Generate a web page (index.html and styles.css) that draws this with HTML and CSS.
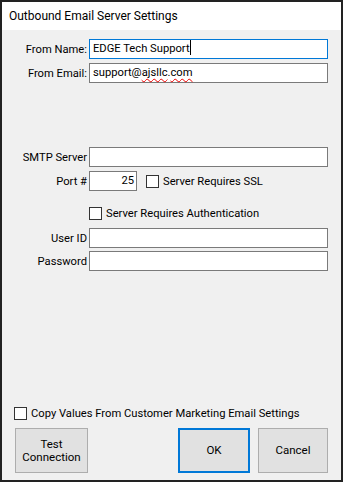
FILE: index.html
```html
<!DOCTYPE html>
<html lang="en">
<head>
  <meta charset="UTF-8" />
  <title>Outbound Email Server Settings</title>
  <link rel="stylesheet" href="styles.css">
</head>
<body>
  <div class="window">
    <div class="titlebar">Outbound Email Server Settings</div>
    <div class="content">
      <div class="fields group-from">
        <label class="lbl">From Name:</label>
        <div class="field focused">EDGE Tech Support<span class="caret"></span></div>
        <label class="lbl">From Email:</label>
        <div class="field">support@<span class="typo">ajsllc</span>.<span class="typo">com</span></div>
      </div>

      <div class="fields group-smtp">
        <label class="lbl">SMTP Server</label>
        <div class="field"></div>
        <label class="lbl">Port #</label>
        <div class="port-row">
          <div class="field port">25</div>
          <span class="check ssl"><span class="box"></span>Server Requires SSL</span>
        </div>
      </div>

      <div class="fields group-auth">
        <span></span>
        <span class="check"><span class="box"></span>Server Requires Authentication</span>
      </div>

      <div class="fields group-login">
        <label class="lbl">User ID</label>
        <div class="field"></div>
        <label class="lbl">Password</label>
        <div class="field"></div>
      </div>

      <div class="spacer"></div>

      <div class="copy-row">
        <span class="check"><span class="box"></span>Copy Values From Customer Marketing Email Settings</span>
      </div>

      <div class="buttons">
        <button class="btn test">Test<br>Connection</button>
        <div class="spacer"></div>
        <button class="btn ok">OK</button>
        <button class="btn cancel">Cancel</button>
      </div>
    </div>
  </div>
</body>
</html>
```

FILE: styles.css
```css
* { box-sizing: border-box; }
body {
  margin: 0;
  font-family: Roboto, "Liberation Sans", Arial, sans-serif;
  font-size: 11.2px;
  color: #000;
  background: #fff;
}
.window {
  width: 343px;
  height: 482px;
  border: 2px solid #222;
  display: flex;
  flex-direction: column;
}
.titlebar {
  height: 28px;
  background: #fff;
  padding: 7px 0 0 7px;
  font-size: 12px;
  line-height: 15px;
}
.content {
  flex: 1;
  background: #f0f0f0;
  display: flex;
  flex-direction: column;
  padding: 0 13px 7px 0;
}
.fields {
  display: grid;
  grid-template-columns: 85px 1fr;
  column-gap: 2px;
  row-gap: 4px;
  align-items: center;
}
.group-from { margin-top: 9px; }
.group-smtp { margin-top: 64px; }
.group-auth { margin-top: 12px; height: 20px; }
.group-login { margin-top: 5px; row-gap: 3px; }
.lbl {
  text-align: right;
  white-space: nowrap;
}
.field {
  height: 20px;
  background: #fff;
  border: 1px solid #7a7a7a;
  padding: 0 3px;
  line-height: 18px;
  white-space: nowrap;
}
.field.focused { border-color: #0078d7; }
.caret {
  display: inline-block;
  width: 1px;
  height: 15px;
  background: #000;
  vertical-align: -3px;
}
.typo {
  text-decoration: underline wavy #e00;
  text-decoration-thickness: 1px;
  text-underline-offset: 2px;
}
.port-row {
  display: flex;
  align-items: center;
}
.field.port {
  width: 48px;
  text-align: right;
  padding-right: 2px;
}
.check {
  display: flex;
  align-items: center;
  gap: 4px;
  white-space: nowrap;
}
.check.ssl { margin-left: 9px; }
.box {
  width: 13px;
  height: 13px;
  border: 1px solid #333;
  background: #fff;
  flex: none;
}
.spacer { flex: 1; }
.copy-row {
  padding-left: 12px;
  margin-bottom: 8px;
}
.buttons {
  display: flex;
  gap: 8px;
  padding-left: 13px;
  height: 45px;
}
.btn {
  font-family: inherit;
  font-size: 11.5px;
  color: #000;
  background: #e1e1e1;
  border: 1px solid #adadad;
  padding: 0;
  line-height: 13px;
}
.btn.test { width: 73px; }
.btn.ok { width: 72px; border: 2px solid #0078d7; }
.btn.cancel { width: 70px; }
```
